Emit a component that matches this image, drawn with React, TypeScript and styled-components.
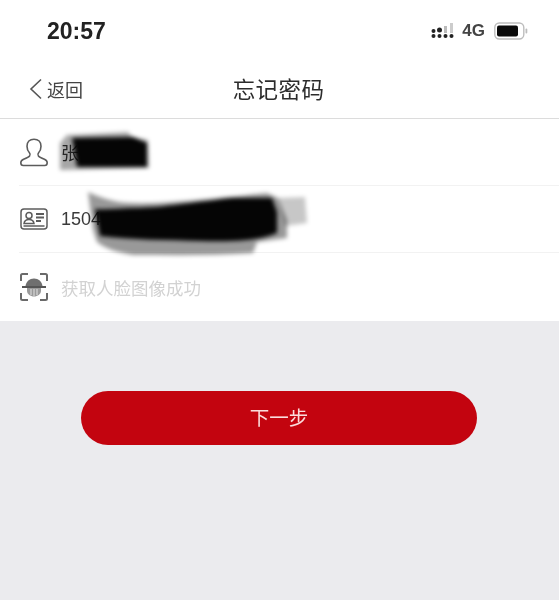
import React from "react";
import styled, { createGlobalStyle } from "styled-components";

const CJK = `"Liberation Sans", "Noto Sans CJK SC", sans-serif`;

const GlobalStyle = createGlobalStyle`
  html, body {
    margin: 0;
    padding: 0;
    background: #ebebee;
  }
`;

const Page = styled.div`
  width: 559px;
  height: 600px;
  overflow: hidden;
  display: flex;
  flex-direction: column;
  background: #ebebee;
  font-family: ${CJK};
  filter: blur(0.6px);
`;

const Header = styled.div`
  background: #fff;
  border-bottom: 1px solid #dcdcdc;
`;

const StatusBar = styled.div`
  height: 62px;
  box-sizing: border-box;
  padding: 0 31px 0 47px;
  display: flex;
  align-items: center;
  justify-content: space-between;
`;

const Clock = styled.span`
  font-size: 23px;
  font-weight: 700;
  color: #222;
`;

const StatusIcons = styled.div`
  display: flex;
  align-items: center;
  gap: 7px;
  font-size: 17px;
  font-weight: 700;
  color: #444;
`;

const NetworkLabel = styled.span`
  margin-right: 2px;
`;

const NavBar = styled.div`
  height: 56px;
  position: relative;
  display: flex;
  align-items: center;
  justify-content: center;
`;

const Back = styled.div`
  position: absolute;
  left: 29px;
  top: 14px;
  display: flex;
  align-items: center;
  gap: 4px;
  font-size: 18px;
  color: #444;
`;

const Title = styled.div`
  font-size: 22.5px;
  letter-spacing: 0.4px;
  color: #2c2c2c;
  margin: 0 2px 4px 0;
`;

const Form = styled.div`
  background: #fff;
  padding-left: 19px;
`;

const Row = styled.div<{ $last?: boolean }>`
  height: ${(p) => (p.$last ? "68px" : "67px")};
  box-sizing: border-box;
  position: relative;
  display: flex;
  align-items: center;
  gap: 13px;
  border-bottom: ${(p) => (p.$last ? "none" : "1px solid #f2f2f2")};
`;

const IconSlot = styled.div`
  width: 29px;
  height: 30px;
  display: flex;
  align-items: center;
  justify-content: center;
  flex: none;
`;

const Value = styled.span<{ $muted?: boolean }>`
  font-size: ${(p) => (p.$muted ? "17.5px" : "18px")};
  color: ${(p) => (p.$muted ? "#d2d2d2" : "#3a3a3a")};
`;

const Scribble = styled.svg`
  position: absolute;
  left: 0;
  top: 0;
  overflow: visible;
  pointer-events: none;
  filter: blur(2px);
`;

const Actions = styled.div`
  padding: 70px 82px 0 81px;
`;

const NextButton = styled.button`
  width: 100%;
  height: 54px;
  border: none;
  border-radius: 27px;
  background: #c3040f;
  color: #fbdcdc;
  font-family: ${CJK};
  font-size: 19.5px;
  padding: 0 0 4px;
`;

function SignalIcon() {
  return (
    <svg width="24" height="16" viewBox="0 0 24 16">
      <g fill="#222">
        <circle cx="2.500" cy="8" r="2" />
        <circle cx="8.500" cy="7" r="2.500" />
        <circle cx="2.500" cy="13" r="2" />
        <circle cx="8.500" cy="13" r="2" />
        <circle cx="14.500" cy="13" r="2" />
        <circle cx="20.500" cy="13" r="2" />
      </g>
      <rect x="13" y="3" width="3" height="7" fill="#bbb" />
      <rect x="19" y="0" width="3" height="10" fill="#ccc" />
    </svg>
  );
}

function BatteryIcon() {
  return (
    <svg width="34" height="18" viewBox="0 0 34 18">
      <rect x="0.800" y="1" width="29" height="16" rx="4.500" fill="none" stroke="#bdbdbd" strokeWidth="1.400" />
      <rect x="3" y="3.500" width="21" height="11" rx="2" fill="#0a0a0a" />
      <rect x="31.500" y="6.500" width="1.800" height="5" rx="0.900" fill="#bdbdbd" />
    </svg>
  );
}

function UserIcon() {
  return (
    <svg width="28" height="29" viewBox="0 0 28 29" fill="none" stroke="#5c5c5c" strokeWidth="1.600">
      <path d="M14 1.200c-4.300 0-7 2.900-7 7 0 2.800 1 5 2.400 6.500.8.900.9 2.400.2 3.300-.8 1-3.500 2.200-6 3.300-2 .9-2.800 2-2.800 3.500 0 1.600.9 2.700 2.500 2.700h21.400c1.600 0 2.500-1.100 2.500-2.700 0-1.500-.8-2.600-2.800-3.500-2.500-1.100-5.200-2.300-6-3.300-.7-.9-.6-2.400.2-3.300C20 13.200 21 11 21 8.200c0-4.100-2.700-7-7-7z" />
    </svg>
  );
}

function IdCardIcon() {
  return (
    <svg width="28" height="22" viewBox="0 0 28 22" fill="none" stroke="#5c5c5c" strokeWidth="1.500">
      <rect x="1" y="1" width="26" height="20" rx="3" />
      <circle cx="9" cy="7.500" r="3" />
      <path d="M4 15.500c.4-2.800 2.300-4 5-4s4.600 1.200 5 4z" />
      <path d="M3.500 18h21" />
      <path d="M16 6h8M16 9.500h8M16 13h5" strokeWidth="2" />
    </svg>
  );
}

function FaceScanIcon() {
  return (
    <svg width="28" height="28" viewBox="0 0 28 28" fill="none" stroke="#6a6a6a" strokeWidth="2">
      <path d="M1 8V2.500C1 1.700 1.700 1 2.500 1H8M20 1h5.500c.8 0 1.500.7 1.500 1.500V8M27 20v5.500c0 .8-.7 1.500-1.500 1.500H20M8 27H2.500C1.700 27 1 26.300 1 25.500V20" />
      <path d="M5.500 13c.6-4.500 4-7.500 8.500-7.500s7.900 3 8.500 7.500z" fill="#6f6f6f" stroke="none" />
      <path d="M7 15h14v3c0 3-3.500 5.500-7 5.500S7 21 7 18z" fill="#9a9a9a" stroke="none" />
      <path d="M2 14h24" stroke="#555" strokeWidth="2" />
      <path d="M11 16v6M14 16v7M17 16v6" stroke="#e2e2e2" strokeWidth="1" />
    </svg>
  );
}

export default function App() {
  return (
    <>
      <GlobalStyle />
      <Page>
        <Header>
          <StatusBar>
            <Clock>20:57</Clock>
            <StatusIcons>
              <SignalIcon />
              <NetworkLabel>4G</NetworkLabel>
              <BatteryIcon />
            </StatusIcons>
          </StatusBar>
          <NavBar>
            <Back>
              <svg width="14" height="22" viewBox="0 0 14 22" fill="none" stroke="#555" strokeWidth="1.600">
                <path d="M12 1.500 2 11l10 9.500" />
              </svg>
              返回
            </Back>
            <Title>忘记密码</Title>
          </NavBar>
        </Header>
        <Form>
          <Row>
            <IconSlot>
              <UserIcon />
            </IconSlot>
            <Value>张</Value>
            <Scribble width="1" height="1">
              <g transform="translate(-19 -119)">
                <path d="M60 143 L67 135 L128 132 L132 137 L148 140 L149 168 L60 170 Z" fill="#000" opacity="0.35" />
                <path d="M72 138 L133 137 L147 143 L147 167 L77 167 Z" fill="#050505" />
              </g>
            </Scribble>
          </Row>
          <Row>
            <IconSlot>
              <IdCardIcon />
            </IconSlot>
            <Value>1504</Value>
            <Scribble width="1" height="1">
              <g transform="translate(-19 -186)">
                <path d="M88 192 C105 200 120 203 133 203 C160 204 200 200 267 193 L278 198 L287 220 L287 238 L257 242 L253 253 C210 256 170 255 133 255 C115 252 105 248 97 242 L93 230 Z" fill="#000" opacity="0.4" />
                <path d="M278 198 L305 197 L307 223 L285 226 Z" fill="#000" opacity="0.22" />
                <path d="M95 209 C110 210 120 208 133 208 C160 208 180 204 232 198 L272 198 L277 212 L277 233 C260 240 240 242 200 241 C170 240 130 240 100 236 Z" fill="#050505" />
              </g>
            </Scribble>
          </Row>
          <Row $last>
            <IconSlot>
              <FaceScanIcon />
            </IconSlot>
            <Value $muted>获取人脸图像成功</Value>
          </Row>
        </Form>
        <Actions>
          <NextButton>下一步</NextButton>
        </Actions>
      </Page>
    </>
  );
}
